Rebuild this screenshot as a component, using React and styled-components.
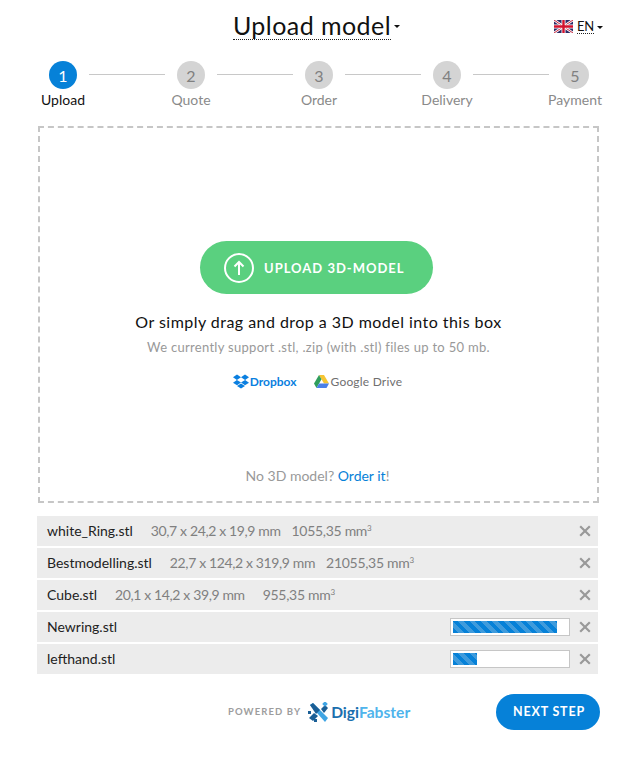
import React from 'react'
import styled, { createGlobalStyle } from 'styled-components'

const GlobalStyle = createGlobalStyle`
  html, body {
    margin: 0;
    padding: 0;
    background: #fff;
    font-family: Lato, "Open Sans", sans-serif;
    color: #111;
  }
  * { box-sizing: border-box; }
`

const Page = styled.div`
  width: 640px;
  height: 757px;
  overflow: hidden;
  display: flex;
  flex-direction: column;
`

const Header = styled.header`
  position: relative;
  height: 61px;
  padding-top: 11px;
  display: flex;
  justify-content: center;
`

const TitleWrap = styled.div`
  display: flex;
  align-items: center;
  height: 29px;
  margin-right: 7px;
`

const Title = styled.h1`
  margin: 0;
  font-size: 25px;
  font-weight: 400;
  line-height: 28px;
  letter-spacing: 0.45px;
  border-bottom: 1px dotted #222;
`

const Caret = styled.span`
  width: 0;
  height: 0;
  margin-left: 3px;
  margin-top: 1px;
  border-left: 3px solid transparent;
  border-right: 3px solid transparent;
  border-top: 3px solid #111;
`

const Lang = styled.div`
  position: absolute;
  top: 19px;
  left: 554px;
  display: flex;
  align-items: center;
  font-size: 13px;
`

const LangLabel = styled.span`
  margin-left: 4px;
  line-height: 14px;
  letter-spacing: -0.3px;
  border-bottom: 1px dotted #222;
`

const Steps = styled.div`
  display: flex;
  padding: 0 51px 0 49px;
  height: 65px;
`

const Step = styled.div`
  width: 28px;
  display: flex;
  flex-direction: column;
  align-items: center;
  flex: none;
`

const Circle = styled.div`
  width: 28px;
  height: 28px;
  border-radius: 50%;
  display: flex;
  align-items: center;
  justify-content: center;
  font-size: 16px;
  background: ${p => (p.$active ? '#0681d8' : '#d4d4d4')};
  color: ${p => (p.$active ? '#fff' : '#808080')};
`

const StepLabel = styled.div`
  margin-top: 2px;
  font-size: 14px;
  line-height: 17px;
  white-space: nowrap;
  color: ${p => (p.$active ? '#111' : '#8a8a8a')};
`

const Connector = styled.div`
  flex: 1;
  height: 1px;
  margin: 13px 12px 0;
  background: #c8c8c8;
`

const DropBox = styled.section`
  width: 561px;
  height: 377px;
  margin-left: 38px;
  border: 2px dashed #c6c6c6;
  display: flex;
  flex-direction: column;
  align-items: center;
  padding-top: 113px;
`

const UploadButton = styled.button`
  width: 233px;
  height: 53px;
  margin-right: 4px;
  border: 0;
  border-radius: 27px;
  background: #5ad07f;
  color: #fff;
  display: flex;
  align-items: center;
  padding: 0 0 0 24px;
  font-family: inherit;
  font-size: 13px;
  font-weight: 700;
  letter-spacing: 1px;
`

const UploadIcon = styled.svg`
  margin-right: 10px;
  flex: none;
`

const DropTitle = styled.p`
  margin: 18px 0 0;
  font-size: 16px;
  line-height: 20px;
  letter-spacing: 0.46px;
`

const DropHint = styled.p`
  margin: 7px 0 0;
  font-size: 13px;
  line-height: 17px;
  letter-spacing: 0.3px;
  color: #999;
`

const Services = styled.div`
  margin-top: 18px;
  margin-right: 2px;
  display: flex;
  align-items: center;
  gap: 18px;
  font-size: 12px;
`

const Service = styled.span`
  display: flex;
  align-items: center;
  gap: ${p => p.$gap}px;
  font-weight: ${p => (p.$bold ? 700 : 400)};
  letter-spacing: ${p => (p.$bold ? 0 : 0.2)}px;
  color: ${p => p.$color};
`

const NoModel = styled.p`
  margin: auto 2px 17px 0;
  font-size: 14px;
  line-height: 17px;
  color: #999;
  a {
    color: #0681d8;
    text-decoration: none;
  }
`

const Files = styled.ul`
  list-style: none;
  margin: 13px 0 0 37px;
  padding: 0;
  width: 561px;
  display: flex;
  flex-direction: column;
  gap: 2px;
`

const FileRow = styled.li`
  height: 30px;
  background: #ececec;
  display: flex;
  align-items: center;
  padding: 0 7px 0 10px;
  font-size: 14px;
`

const FileName = styled.span`
  margin-bottom: 2px;
  color: #222;
`

const FileDims = styled.span`
  margin: 0 0 2px 18px;
  letter-spacing: -0.37px;
  color: #808080;
`

const FileVolume = styled.span`
  margin: 0 0 2px ${p => p.$gap}px;
  letter-spacing: -0.3px;
  color: #808080;
  sup {
    font-size: 8px;
    line-height: 0;
    vertical-align: 5px;
  }
`

const Progress = styled.div`
  margin-left: auto;
  width: 120px;
  height: 18px;
  padding: 2px;
  background: #fff;
  border: 1px solid #c6c6c6;
`

const ProgressFill = styled.div`
  height: 100%;
  background: repeating-linear-gradient(45deg, #0681d8 0 4px, #3f9bdc 4px 8px);
`

const Close = styled.svg`
  flex: none;
  margin-left: ${p => (p.$push ? 'auto' : '9px')};
`

const Footer = styled.footer`
  margin-top: 20px;
  padding: 0 40px 0 228px;
  display: flex;
  align-items: center;
`

const Powered = styled.span`
  margin-bottom: 2px;
  font-size: 9.5px;
  font-weight: 700;
  letter-spacing: 1.1px;
  color: #9d9d9d;
`

const Brand = styled.span`
  margin-left: 7px;
  display: flex;
  align-items: center;
  gap: 1px;
  font-size: 15.6px;
  font-weight: 700;
  color: #1b6fae;
  span {
    color: #4fb4ec;
  }
`

const NextButton = styled.button`
  margin-left: auto;
  width: 104px;
  height: 36px;
  padding: 0 0 2px 2px;
  border: 0;
  border-radius: 18px;
  background: #0681d8;
  color: #fff;
  font-family: inherit;
  font-size: 12.5px;
  font-weight: 700;
  letter-spacing: 0.8px;
`

const steps = ['Upload', 'Quote', 'Order', 'Delivery', 'Payment']

const files = [
  { name: 'white_Ring.stl', dims: '30,7 x 24,2 x 19,9 mm', volume: '1055,35', gap: 11 },
  { name: 'Bestmodelling.stl', dims: '22,7 x 124,2 x 319,9 mm', volume: '21055,35', gap: 11 },
  { name: 'Cube.stl', dims: '20,1 x 14,2 x 39,9 mm', volume: '955,35', gap: 18 },
  { name: 'Newring.stl', progress: 104 },
  { name: 'lefthand.stl', progress: 24 },
]

function Flag() {
  return (
    <svg width="19" height="13" viewBox="0 0 19 13">
      <rect width="19" height="13" fill="#2b2a66" />
      <path d="M0 0L19 13M19 0L0 13" stroke="#fff" strokeWidth="2.6" />
      <path d="M0 0L19 13M19 0L0 13" stroke="#c8243c" strokeWidth="1" />
      <path d="M9.5 0V13M0 6.5H19" stroke="#fff" strokeWidth="4" />
      <path d="M9.5 0V13M0 6.5H19" stroke="#d2122e" strokeWidth="2.4" />
    </svg>
  )
}

function Dropbox() {
  return (
    <svg width="16" height="15" viewBox="0 0 16 15" fill="#0a7fe0">
      <path d="M4 0.5L0 3.2L3.9 6L8 3.3Z" />
      <path d="M12 0.5L16 3.2L12.1 6L8 3.3Z" />
      <path d="M0 8.7L3.9 6L8 8.6L4 11.2Z" />
      <path d="M16 8.7L12.1 6L8 8.6L12 11.2Z" />
      <path d="M4 12L8 9.5L12 12L8 14.6Z" />
    </svg>
  )
}

function Drive() {
  return (
    <svg width="15" height="13" viewBox="0 0 15 13">
      <path d="M5 0H10L15 8.6H10Z" fill="#f5c533" />
      <path d="M5 0L7.5 4.3L2.5 13L0 8.6Z" fill="#2f9e5c" />
      <path d="M2.5 13L5 8.6H15L12.5 13Z" fill="#4a80e8" />
    </svg>
  )
}

function BrandLogo() {
  return (
    <svg width="22" height="21" viewBox="0 0 22 21">
      <path d="M2 3L5 1L20 16L17 20Z" fill="#3fa5e4" />
      <path d="M5 1L12 8L8 12L2 3Z" fill="#1b5f96" />
      <path d="M13 7L17 3L20 6L16 11Z" fill="#1b5f96" />
      <path d="M6 11L10 14L5 19L1 16Z" fill="#1b5f96" />
      <rect x="15" y="0" width="4" height="4" fill="#3fa5e4" transform="rotate(45 17 2)" />
      <rect x="6" y="17" width="3" height="3" fill="#1b5f96" />
      <rect x="0" y="9" width="3" height="3" fill="#1b5f96" />
    </svg>
  )
}

function CloseIcon({ push }) {
  return (
    <Close $push={push} width="12" height="12" viewBox="0 0 12 12">
      <path d="M1.2 1.2L10.8 10.8M10.8 1.2L1.2 10.8" stroke="#999" strokeWidth="2.2" />
    </Close>
  )
}

export default function App() {
  return (
    <Page>
      <GlobalStyle />
      <Header>
        <TitleWrap>
          <Title>Upload model</Title>
          <Caret />
        </TitleWrap>
        <Lang>
          <Flag />
          <LangLabel>EN</LangLabel>
          <Caret />
        </Lang>
      </Header>

      <Steps>
        {steps.map((label, i) => (
          <React.Fragment key={label}>
            {i > 0 && <Connector />}
            <Step>
              <Circle $active={i === 0}>{i + 1}</Circle>
              <StepLabel $active={i === 0}>{label}</StepLabel>
            </Step>
          </React.Fragment>
        ))}
      </Steps>

      <DropBox>
        <UploadButton>
          <UploadIcon width="30" height="30" viewBox="0 0 30 30" fill="none" stroke="#fff" strokeWidth="2">
            <circle cx="15" cy="15" r="14" />
            <path d="M15 22V9M10.5 13.5L15 9L19.5 13.5" />
          </UploadIcon>
          UPLOAD 3D-MODEL
        </UploadButton>
        <DropTitle>Or simply drag and drop a 3D model into this box</DropTitle>
        <DropHint>We currently support .stl, .zip (with .stl) files up to 50 mb.</DropHint>
        <Services>
          <Service $bold $color="#0a7fe0" $gap={1}>
            <Dropbox />
            Dropbox
          </Service>
          <Service $color="#6f6f6f" $gap={1}>
            <Drive />
            Google Drive
          </Service>
        </Services>
        <NoModel>
          No 3D model? <a href="#order">Order it</a>!
        </NoModel>
      </DropBox>

      <Files>
        {files.map(file => (
          <FileRow key={file.name}>
            <FileName>{file.name}</FileName>
            {file.dims && <FileDims>{file.dims}</FileDims>}
            {file.volume && (
              <FileVolume $gap={file.gap}>
                {file.volume} mm<sup>3</sup>
              </FileVolume>
            )}
            {file.progress ? (
              <>
                <Progress>
                  <ProgressFill style={{ width: file.progress }} />
                </Progress>
                <CloseIcon />
              </>
            ) : (
              <CloseIcon push />
            )}
          </FileRow>
        ))}
      </Files>

      <Footer>
        <Powered>POWERED BY</Powered>
        <Brand>
          <BrandLogo />
          <div>
            Digi<span>Fabster</span>
          </div>
        </Brand>
        <NextButton>NEXT STEP</NextButton>
      </Footer>
    </Page>
  )
}
